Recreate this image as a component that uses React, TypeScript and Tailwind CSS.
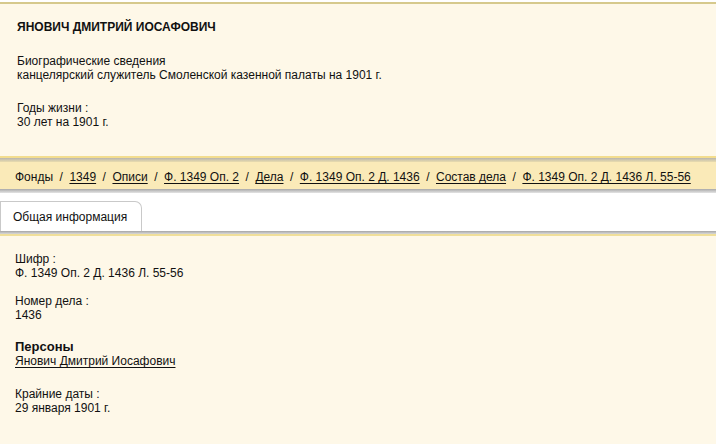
export default function App() {
  const crumbs = [
    { t: 'Фонды', link: false },
    { t: '1349', link: true },
    { t: 'Описи', link: true },
    { t: 'Ф. 1349 Оп. 2', link: true },
    { t: 'Дела', link: true },
    { t: 'Ф. 1349 Оп. 2 Д. 1436', link: true },
    { t: 'Состав дела', link: true },
    { t: 'Ф. 1349 Оп. 2 Д. 1436 Л. 55-56', link: true },
  ];

  return (
    <div className="w-[716px] h-[444px] overflow-hidden bg-[#fef8e8] text-[12px] leading-[14px] text-[#111] font-['Liberation_Sans',Arial,sans-serif]">
      <div className="h-[2px] bg-white" />
      <div className="h-[2px] bg-[#d6c98c]" />
      <div className="h-[152px] px-[17px] pt-[16px]">
        <div className="font-bold">ЯНОВИЧ ДМИТРИЙ ИОСАФОВИЧ</div>
        <div className="mt-[20px]">Биографические сведения</div>
        <div>канцелярский служитель Смоленской казенной палаты на 1901 г.</div>
        <div className="mt-[19px]">Годы жизни :</div>
        <div>30 лет на 1901 г.</div>
      </div>

      <div className="h-[2px] bg-[#f3dd8e]" />
      <div className="h-[4px] bg-gradient-to-b from-[#b9b6ad] to-[#e9dcae]" />
      <div className="h-[27px] bg-[#faeab8] flex items-center pt-[3px] px-[15px] gap-[6.5px]">
        {crumbs.map((c, i) => (
          <div key={i} className="flex items-center gap-[6.5px]">
            {i > 0 && <span>/</span>}
            <span className={c.link ? 'underline underline-offset-[2px]' : ''}>{c.t}</span>
          </div>
        ))}
      </div>
      <div className="h-[4px] bg-gradient-to-b from-[#a9a9a9] to-[#e4e4e4]" />

      <div className="h-[38px] bg-white flex items-end">
        <div className="h-[30px] w-[142px] border border-b-0 border-[#c9c9c9] rounded-tr-[7px] flex items-center pl-[12px] bg-white">
          Общая информация
        </div>
      </div>
      <div className="h-[3px] bg-gradient-to-b from-[#a6a6a6] to-[#d9d9d9]" />
      <div className="h-[2px] bg-[#f0df9a]" />

      <div className="px-[15px] pt-[16px]">
        <div>Шифр :</div>
        <div>Ф. 1349 Оп. 2 Д. 1436 Л. 55-56</div>
        <div className="mt-[14px]">Номер дела :</div>
        <div>1436</div>
        <div className="mt-[17px] font-bold text-[13px] leading-[15px]">Персоны</div>
        <div className="underline underline-offset-[2px]">Янович Дмитрий Иосафович</div>
        <div className="mt-[19px]">Крайние даты :</div>
        <div>29 января 1901 г.</div>
      </div>
    </div>
  );
}
